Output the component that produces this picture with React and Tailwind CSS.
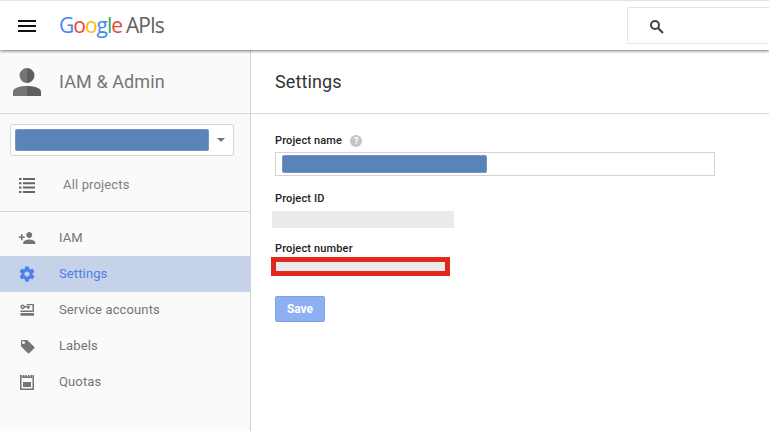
import React from 'react';

const font = { fontFamily: 'Roboto, "Liberation Sans", sans-serif' };

// Iconos del menú lateral
const PersonAddIcon = () => (
  <svg width="18" height="18" viewBox="0 0 24 24" fill="currentColor">
    <path d="M15 12c2.21 0 4-1.79 4-4s-1.79-4-4-4-4 1.79-4 4 1.79 4 4 4zm-9-2V7H4v3H1v2h3v3h2v-3h3v-2H6zm9 4c-2.67 0-8 1.34-8 4v2h16v-2c0-2.66-5.33-4-8-4z" />
  </svg>
);

const GearIcon = () => (
  <svg width="18" height="18" viewBox="0 0 24 24" fill="currentColor">
    <path d="M19.43 12.98c.04-.32.07-.64.07-.98s-.03-.66-.07-.98l2.11-1.65c.19-.15.24-.42.12-.64l-2-3.46c-.12-.22-.39-.3-.61-.22l-2.49 1c-.52-.4-1.08-.73-1.69-.98l-.38-2.65C14.46 2.18 14.25 2 14 2h-4c-.25 0-.46.18-.49.42l-.38 2.65c-.61.25-1.17.59-1.69.98l-2.49-1c-.23-.09-.49 0-.61.22l-2 3.46c-.13.22-.07.49.12.64l2.11 1.65c-.04.32-.07.65-.07.98s.03.66.07.98l-2.11 1.65c-.19.15-.24.42-.12.64l2 3.46c.12.22.39.3.61.22l2.49-1c.52.4 1.08.73 1.69.98l.38 2.65c.03.24.24.42.49.42h4c.25 0 .46-.18.49-.42l.38-2.65c.61-.25 1.17-.59 1.69-.98l2.49 1c.23.09.49 0 .61-.22l2-3.46c.12-.22.07-.49-.12-.64l-2.11-1.65zM12 15.5c-1.93 0-3.5-1.57-3.5-3.5s1.57-3.5 3.5-3.5 3.5 1.57 3.5 3.5-1.57 3.5-3.5 3.5z" />
  </svg>
);

const ServiceIcon = () => (
  <svg width="14" height="12" viewBox="0 0 14 12" fill="currentColor">
    <path fillRule="evenodd" d="M2.600 0.500a2.300 2.300 0 0 1 2.200 1.600H10v1.500H9V5H7.500V3.600H4.800A2.300 2.300 0 1 1 2.600.5zm0 1.400a.9.900 0 1 0 0 1.800.9.900 0 0 0 0-1.800z" />
    <path d="M6.500 0H14v8h-1.500V1.300h-6z" />
    <path d="M.5 6.500h12V8h-12zM.5 9H14v2.800H.5z" />
  </svg>
);

const LabelIcon = () => (
  <svg width="15" height="15" viewBox="0 0 15 15" fill="currentColor">
    <path d="M1 2.200C1 1.500 1.500 1 2.200 1h4.600c.4 0 .7.1 1 .4l6.300 6.300c.5.500.5 1.200 0 1.700l-4.700 4.700c-.5.500-1.200.5-1.700 0L1.400 7.800c-.3-.3-.4-.6-.4-1zM3.500 5a1.500 1.500 0 1 0 0-3 1.500 1.500 0 0 0 0 3z" />
  </svg>
);

const QuotasIcon = () => (
  <svg width="14" height="15" viewBox="0 0 14 15" fill="currentColor">
    <path d="M0 0h2v1.500h1V0h1.500v1.500h1V0H7v1.500h1V0h1.500v1.500h1V0H12v1.500h.5V0H14v15H0zm1.500 2v11.500h11V2H12v1H2V2z" />
    <path d="M3 7h8v5H3z" />
  </svg>
);

const menuItems = [
  { label: 'IAM', icon: <PersonAddIcon /> },
  { label: 'Settings', icon: <GearIcon />, active: true },
  { label: 'Service accounts', icon: <ServiceIcon /> },
  { label: 'Labels', icon: <LabelIcon /> },
  { label: 'Quotas', icon: <QuotasIcon /> },
];

const Header = () => (
  <header className="relative z-10 flex h-[50px] shrink-0 items-center border-t border-[#e4e4e4] bg-white shadow-[0_1px_3px_rgba(0,0,0,0.55)]">
    <svg className="ml-[18px]" width="18" height="14" viewBox="0 0 18 14" fill="#111">
      <path d="M0 1h18v2H0zM0 6h18v2H0zM0 11h18v2H0z" />
    </svg>
    <div className="ml-[23px] flex items-baseline text-[21px] leading-none tracking-[-1px]" style={{ fontFamily: '"Open Sans", sans-serif' }}>
      <span className="text-[#4285f4]">G</span>
      <span className="text-[#ea4335]">o</span>
      <span className="text-[#fbbc05]">o</span>
      <span className="text-[#4285f4]">g</span>
      <span className="text-[#34a853]">l</span>
      <span className="text-[#ea4335]">e</span>
      <span className="ml-[4px] text-[#616161]">APIs</span>
    </div>
    <div className="mb-[1px] ml-auto flex h-[37px] w-[142px] items-center rounded-l-[2px] border border-r-0 border-[#e6e6e6] pl-[21px] pt-[2px]">
      <svg width="15" height="15" viewBox="0 0 15 15" fill="none" stroke="#444">
        <circle cx="6" cy="6" r="4" strokeWidth="2" />
        <path d="M9 9l5 5" strokeWidth="2.2" />
      </svg>
    </div>
  </header>
);

const Sidebar = () => (
  <aside className="flex w-[251px] shrink-0 flex-col border-r border-[#d4d4d4] bg-[#fafafa]">
    <div className="flex h-[64px] shrink-0 items-center border-b border-[#d8d8d8] pl-[13px]">
      <svg width="28" height="28" viewBox="0 0 28 28">
        <path d="M14 0a7.500 7.500 0 0 0 0 15zM14 18c-6 0-14 1.800-14 5.500V28h14z" fill="#757575" />
        <path d="M14 0a7.500 7.500 0 0 1 0 15zM14 18c6 0 14 1.800 14 5.500V28H14z" fill="#5f5f5f" />
      </svg>
      <span className="ml-[18px] text-[18px] tracking-[0.1px] text-[#757575]">IAM &amp; Admin</span>
    </div>
    <div className="shrink-0 border-b border-[#d8d8d8] px-[10px] pt-[10px]">
      <div className="flex h-[32px] w-[224px] items-center rounded-[2px] border border-[#d4d4d4] bg-white pl-[4px]">
        <div className="h-[22px] w-[194px] rounded-[2px] border border-dotted border-[#8fabd0] bg-[#5a84b9]" />
        <div className="ml-[8px] h-0 w-0 border-x-[4px] border-t-[4px] border-x-transparent border-t-[#757575]" />
      </div>
      <div className="flex h-[55px] items-center pl-[9px] pt-[3px]">
        <svg width="16" height="15" viewBox="0 0 16 15" fill="#666">
          <path d="M0 0h2.500v2H0zM4 0h12v2H4zM0 4.300h2.500v2H0zM4 4.300h12v2H4zM0 8.600h2.500v2H0zM4 8.600h12v2H4zM0 13h2.500v2H0zM4 13h12v2H4z" />
        </svg>
        <span className="ml-[28px] text-[13px] tracking-[0.15px] text-[#808080]">All projects</span>
      </div>
    </div>
    <nav className="pt-[8px]">
      {menuItems.map((item) => (
        <div
          key={item.label}
          className={`flex h-[36px] items-center ${item.active ? 'bg-[#c5d2e8] text-[#4a80ec]' : 'text-[#757575]'}`}
        >
          <span className="flex w-[54px] justify-center">{item.icon}</span>
          <span className="ml-[5px] text-[13px] tracking-[0.12px]">{item.label}</span>
        </div>
      ))}
    </nav>
  </aside>
);

const Label = ({ children }) => (
  <div className="h-[14px] text-[11px] font-medium leading-[14px] tracking-[0.15px] text-[#212121]">{children}</div>
);

const Main = () => (
  <main className="flex min-w-0 flex-1 flex-col bg-white">
    <div className="flex h-[64px] shrink-0 items-center border-b border-[#d8d8d8] pl-[24px]">
      <h1 className="text-[18px] tracking-[0.1px] text-[#333]">Settings</h1>
    </div>
    <form className="flex flex-col pl-[24px] pt-[20px]">
      <div className="flex items-center">
        <Label>Project name</Label>
        <span className="ml-[8px] flex h-[12px] w-[12px] items-center justify-center rounded-full bg-[#c4c4c4] text-[9px] font-bold leading-none text-white">?</span>
      </div>
      <div className="mt-[4px] flex h-[24px] w-[440px] items-center border border-[#d4d4d4] pl-[6px]">
        <div className="h-[18px] w-[205px] rounded-[2px] border border-dotted border-[#8fabd0] bg-[#5a84b9]" />
      </div>
      <div className="mt-[16px]"><Label>Project ID</Label></div>
      <div className="ml-[-3px] mt-[5px] h-[17px] w-[182px] bg-[#ebebeb]" />
      <div className="mt-[14px]"><Label>Project number</Label></div>
      <div className="ml-[-4px] mt-[1px] h-[19px] w-[179px] border-[5px] border-[#e0281c] bg-[#ebebeb]" />
      <button
        type="button"
        className="mt-[20px] h-[26px] w-[50px] rounded-[2px] border border-[#7ea3ee] bg-[#8cb0f1] text-[12px] font-bold text-white"
      >
        Save
      </button>
    </form>
  </main>
);

export default function App() {
  return (
    <div className="flex h-[431px] w-[769px] flex-col overflow-hidden bg-white" style={font}>
      <Header />
      <div className="flex min-h-0 flex-1">
        <Sidebar />
        <Main />
      </div>
    </div>
  );
}
